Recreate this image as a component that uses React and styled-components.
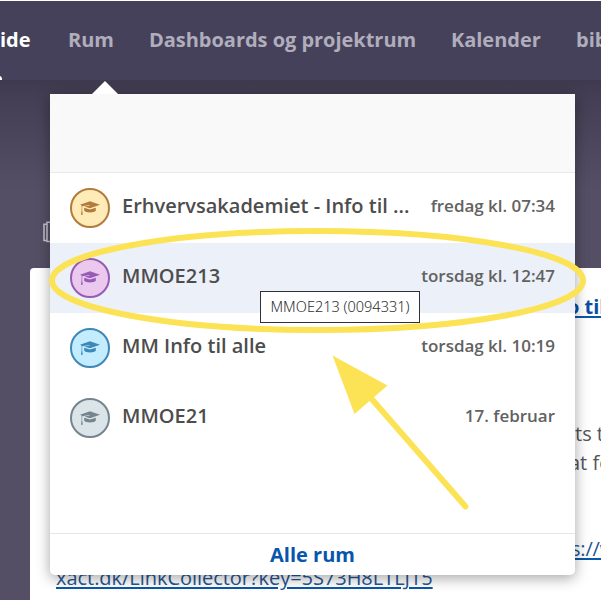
import React from "react";
import styled, { createGlobalStyle } from "styled-components";

const GlobalStyle = createGlobalStyle`
  * { box-sizing: border-box; }
  body {
    margin: 0;
    overflow: hidden;
    background: #554f65;
    font-family: "Open Sans", "Noto Sans", sans-serif;
  }
`;

const Page = styled.div`
  position: relative;
  display: flex;
  flex-direction: column;
  width: 601px;
  height: 600px;
  overflow: hidden;
`;

const NavBar = styled.nav`
  display: flex;
  flex: none;
  gap: 36px;
  height: 80px;
  border-top: 1px solid #fff;
  background: #46415a;
  line-height: 78px;
  white-space: nowrap;
`;

const NavItem = styled.a`
  flex: none;
  position: relative;
  width: ${(p) => p.$width}px;
  color: ${(p) => (p.$active ? "#fff" : "#b0aebc")};
  font-size: 20px;
  font-weight: 700;
  letter-spacing: -0.03px;
  &::after {
    content: "";
    display: ${(p) => (p.$active ? "block" : "none")};
    position: absolute;
    left: -3px;
    bottom: 0;
    width: 5px;
    height: 4px;
    border-radius: 0 3px 0 0;
    background: #fff;
  }
`;

const Body = styled.main`
  display: flex;
  flex-direction: column;
  flex: 1;
  background: linear-gradient(#3e394d 0, #433e53 14px, #554f65 110px);
`;

const Toolbar = styled.div`
  height: 188px;
  padding: 141px 0 0 43px;
`;

const Article = styled.article`
  display: flex;
  flex-direction: column;
  flex: 1;
  margin-left: 30px;
  padding-top: 24px;
  border-radius: 4px 0 0 0;
  background: #fff;
  font-size: 20px;
  line-height: 29px;
  color: #555;
  white-space: nowrap;
`;

const Line = styled.div`
  height: 29px;
  margin-top: ${(p) => p.$gap || 0}px;
  padding-left: ${(p) => p.$indent}px;
`;

const TextLink = styled.a`
  color: ${(p) => (p.$strong ? "#0b4ea2" : "#245696")};
  font-weight: ${(p) => (p.$strong ? 700 : 400)};
  letter-spacing: ${(p) => p.$spacing || 0}px;
  text-decoration: underline;
  text-decoration-color: #0b57a8;
  text-decoration-thickness: 2px;
  text-underline-offset: 2px;
`;

const Menu = styled.section`
  position: absolute;
  left: 50px;
  top: 94px;
  display: flex;
  flex-direction: column;
  width: 525px;
  height: 481px;
  border-radius: 0 0 5px 5px;
  background: #fff;
  box-shadow: 0 3px 14px rgba(0, 0, 0, 0.36);
  &::before {
    content: "";
    position: absolute;
    left: 42px;
    top: -13px;
    border: 13.5px solid transparent;
    border-top: 0;
    border-bottom: 13px solid #fff;
  }
`;

const MenuHeader = styled.header`
  height: 79px;
  border-bottom: 1px solid #e9e9e9;
  background: #f9f9f9;
`;

const RoomList = styled.div`
  flex: 1;
`;

const RoomRow = styled.div`
  display: flex;
  align-items: center;
  height: 70px;
  padding: 0 20px;
  background: ${(p) => (p.$selected ? "#ecf0f9" : "transparent")};
`;

const Badge = styled.span`
  display: flex;
  align-items: center;
  justify-content: center;
  width: 40px;
  height: 40px;
  margin-right: 12px;
  border: 2px solid ${(p) => p.$color};
  border-radius: 50%;
  background: ${(p) => p.$fill};
  color: ${(p) => p.$color};
`;

const RoomName = styled.span`
  flex: 1;
  padding-bottom: 6px;
  color: #4d4d4d;
  font-size: 20px;
  font-weight: 600;
  white-space: nowrap;
`;

const RoomTime = styled.time`
  padding-bottom: 5px;
  color: #626262;
  font-size: 17px;
  font-weight: 600;
  letter-spacing: -0.02px;
  white-space: nowrap;
`;

const MenuFooter = styled.footer`
  height: 42px;
  border-top: 1px solid #e7e7e7;
  color: #0756ad;
  font-size: 20px;
  font-weight: 700;
  line-height: 41px;
  text-align: center;
`;

const Annotation = styled.svg`
  position: absolute;
  inset: 0;
  pointer-events: none;
`;

const Tooltip = styled.div`
  position: absolute;
  left: 260px;
  top: 291px;
  width: 160px;
  height: 32px;
  border: 1px solid #303038;
  background: #fff;
  color: #2e2e2e;
  font-family: "Noto Sans", sans-serif;
  font-size: 14.5px;
  font-weight: 300;
  line-height: 29px;
  text-align: center;
  white-space: nowrap;
`;

function GraduationCap() {
  return (
    <svg width="22" height="18" viewBox="0 0 22 18" fill="currentColor">
      <path d="M1 5.8 11 2.2l10 3.6-10 3.4-5.6-1.6 5.4-1.1-.2-.6-7.4 1.4v4.3l.6 4.2H1.9l.7-4.2V6.5Z" />
      <path d="M5.2 8.7 11 10.5l5.8-1.8v3c-1.1 1-3 1.7-5.8 1.7s-4.8-.7-5.8-1.7Z" />
    </svg>
  );
}

function PagesIcon() {
  return (
    <svg width="18" height="22" viewBox="0 0 18 22" fill="none" stroke="#c9c6d1" strokeWidth="1.5">
      <path d="M4 3.2H1v16.3h3M4 1.2h13v19.3H4Z" />
    </svg>
  );
}

const navItems = [
  { label: "ide", width: 32, active: true },
  { label: "Rum", width: 45 },
  { label: "Dashboards og projektrum", width: 266 },
  { label: "Kalender", width: 89 },
  { label: "bibliotek", width: 90 },
];

const rooms = [
  { name: "Erhvervsakademiet - Info til ...", time: "fredag kl. 07:34", color: "#b27b3c", fill: "#ffebb8" },
  { name: "MMOE213", time: "torsdag kl. 12:47", color: "#965bb5", fill: "#ebc9ee", selected: true },
  { name: "MM Info til alle", time: "torsdag kl. 10:19", color: "#3d88b6", fill: "#c3edff" },
  { name: "MMOE21", time: "17. februar", color: "#75858e", fill: "#dbe5e9" },
];

export default function App() {
  return (
    <Page>
      <GlobalStyle />
      <NavBar>
        {navItems.map((item) => (
          <NavItem key={item.label} $width={item.width} $active={item.active}>
            {item.label}
          </NavItem>
        ))}
      </NavBar>
      <Body>
        <Toolbar>
          <PagesIcon />
        </Toolbar>
        <Article>
          <Line $indent={537}><TextLink $strong>o til</TextLink></Line>
          <Line $indent={545} $gap={98}>ts til</Line>
          <Line $indent={539}>at for</Line>
          <Line $indent={541} $gap={57}><TextLink $spacing={-0.2}>s://www</TextLink></Line>
          <Line $indent={26}><TextLink $spacing={-0.04}>xact.dk/LinkCollector?key=5S73H8LTLJ15</TextLink></Line>
        </Article>
      </Body>
      <Menu>
        <MenuHeader />
        <RoomList>
          {rooms.map((room) => (
            <RoomRow key={room.name} $selected={room.selected}>
              <Badge $color={room.color} $fill={room.fill}><GraduationCap /></Badge>
              <RoomName>{room.name}</RoomName>
              <RoomTime>{room.time}</RoomTime>
            </RoomRow>
          ))}
        </RoomList>
        <MenuFooter>Alle rum</MenuFooter>
      </Menu>
      <Annotation width="601" height="600" viewBox="0 0 601 600">
        <ellipse cx="317.5" cy="280.5" rx="265.5" ry="49.5" fill="none" stroke="#fce355" strokeWidth="6" />
        <path d="m370 397 95.5 109.5" stroke="#fce355" strokeWidth="5.8" strokeLinecap="round" />
        <path d="m332.5 355.5 55 30-33 28.5Z" fill="#fce355" />
      </Annotation>
      <Tooltip>MMOE213 (0094331)</Tooltip>
    </Page>
  );
}
